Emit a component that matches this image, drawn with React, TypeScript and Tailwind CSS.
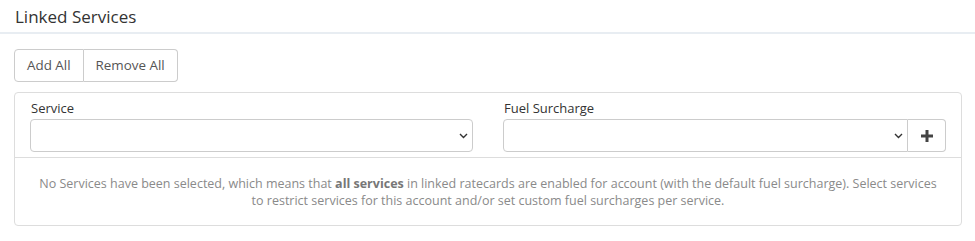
import React from "react";

function Chevron() {
  return (
    <svg width="9" height="6" viewBox="0 0 9 6" className="text-[#333]">
      <path d="M1 1l3.5 3.5L8 1" fill="none" stroke="currentColor" strokeWidth="1.4" />
    </svg>
  );
}

export default function App() {
  return (
    <div className="w-[975px] h-[241px] bg-white text-[#555]" style={{ fontFamily: '"Open Sans", sans-serif' }}>
      <div className="h-[34px] border-b-2 border-[#e8edf2] pl-[15px] pt-[5px]">
        <h2 className="text-[17px] leading-[24px] text-[#333]">Linked Services</h2>
      </div>
      <div className="pl-[14px] pr-[13px] pt-[15px]">
        <div className="flex">
          <button className="h-[33px] px-[12px] text-[13.4px] text-[#555] border border-[#ccc] rounded-l-[4px] bg-white">Add All</button>
          <button className="h-[33px] px-[12px] text-[13.4px] text-[#555] border border-l-0 border-[#ccc] rounded-r-[4px] bg-white">Remove All</button>
        </div>
        <div className="mt-[10px] border border-[#ddd] rounded-[4px]">
          <div className="flex border-b border-[#ddd] pb-[5px]">
            <div className="w-1/2 px-[15px] pt-[6px]">
              <label className="block text-[13px] leading-[18px] text-[#333] pl-[1px] mb-[2px]">Service</label>
              <div className="h-[33px] border border-[#ccc] rounded-[4px] flex items-center justify-end pr-[4px]">
                <Chevron />
              </div>
            </div>
            <div className="w-1/2 px-[15px] pt-[6px]">
              <label className="block text-[13px] leading-[18px] text-[#333] pl-[1px] mb-[2px]">Fuel Surcharge</label>
              <div className="flex h-[33px]">
                <div className="flex-1 border border-[#ccc] rounded-l-[4px] flex items-center justify-end pr-[4px]">
                  <Chevron />
                </div>
                <div className="w-[38px] border border-l-0 border-[#ccc] rounded-r-[4px] flex items-center justify-center">
                  <svg width="12" height="12" viewBox="0 0 12 12">
                    <path d="M4.5 0h3v4.5H12v3H7.5V12h-3V7.5H0v-3h4.5z" fill="#444" />
                  </svg>
                </div>
              </div>
            </div>
          </div>
          <p className="px-[21px] pt-[17px] pb-[16px] text-center text-[12.5px] leading-[17px] text-[#8a8a8a]">
            No Services have been selected, which means that <b className="font-bold text-[#777]">all services</b> in linked ratecards are enabled for account (with the default fuel surcharge). Select services to restrict services for this account and/or set custom fuel surcharges per service.
          </p>
        </div>
      </div>
    </div>
  );
}
